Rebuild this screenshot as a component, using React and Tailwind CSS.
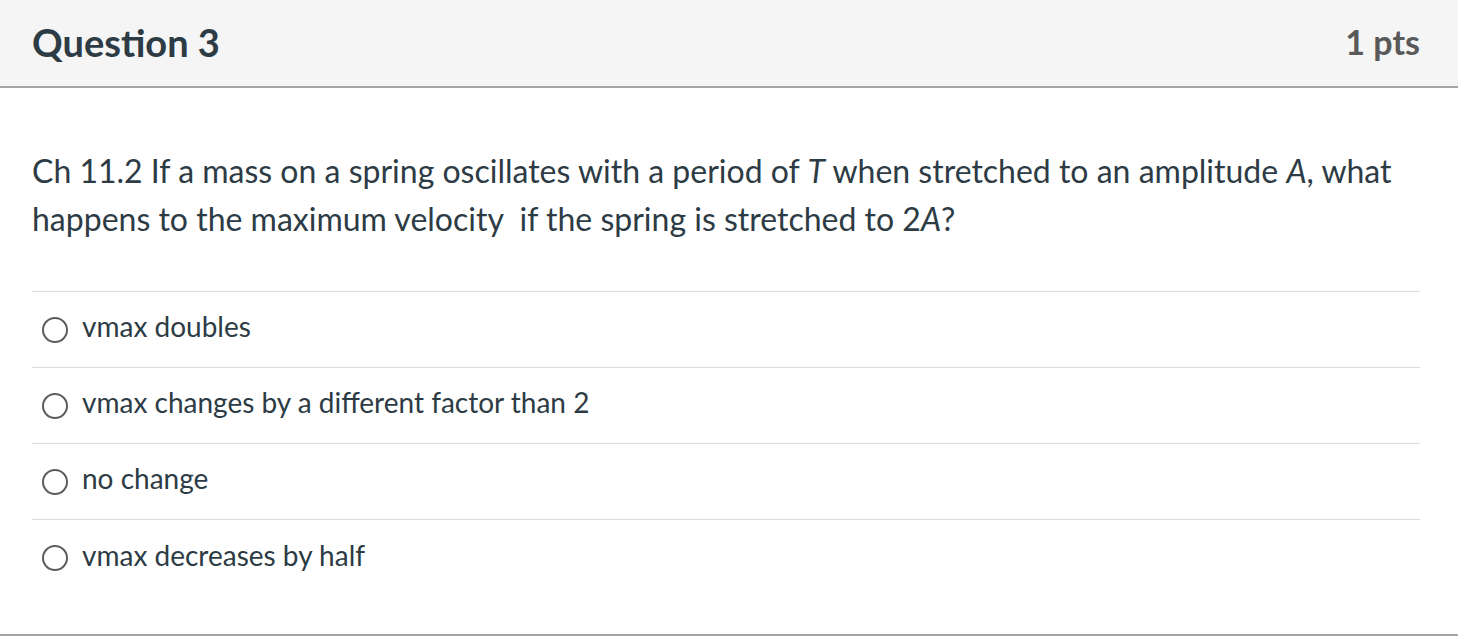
import React from 'react';

const answers = [
    'vmax doubles',
    'vmax changes by a different factor than 2',
    'no change',
    'vmax decreases by half',
];

export default function App() {
    return (
        <div className="w-[1458px] h-[642px] bg-white font-['Lato','Noto_Sans',sans-serif] text-[#2d3b45]">
            {/* Header */}
            <div className="h-[88px] bg-[#f5f5f5] border-b-2 border-[#a5a5a5] flex items-center justify-between pl-[32px] pr-[38px]">
                <h2 className="text-[38px] font-bold leading-none pb-[2px]">Question 3</h2>
                <span className="text-[34px] font-bold text-[#595959] leading-none pb-[2px]">1 pts</span>
            </div>

            {/* Body */}
            <div className="px-[32px] pr-[38px]">
                <p className="pt-[59px] pb-[48px] text-[32px] leading-[48px]">
                    Ch 11.2 If a mass on a spring oscillates with a period of <i>T</i> when stretched to an amplitude <i>A</i>, what happens to the maximum velocity&nbsp; if the spring is stretched to 2<i>A</i>?
                </p>
                <div className="border-t border-[#dadada]">
                    {answers.map((a, i) => (
                        <label key={i} className={`h-[76px] flex items-center gap-[14px] pl-[10px] ${i < answers.length - 1 ? 'border-b border-[#dadada]' : ''}`}>
                            <span className="w-[26px] h-[26px] rounded-full border-2 border-[#5c5c5c] bg-white shrink-0" />
                            <span className="text-[28px] pb-[7px]">{a}</span>
                        </label>
                    ))}
                </div>
            </div>
            <div className="mt-[38px] border-t-2 border-[#a5a5a5]" />
        </div>
    );
}
